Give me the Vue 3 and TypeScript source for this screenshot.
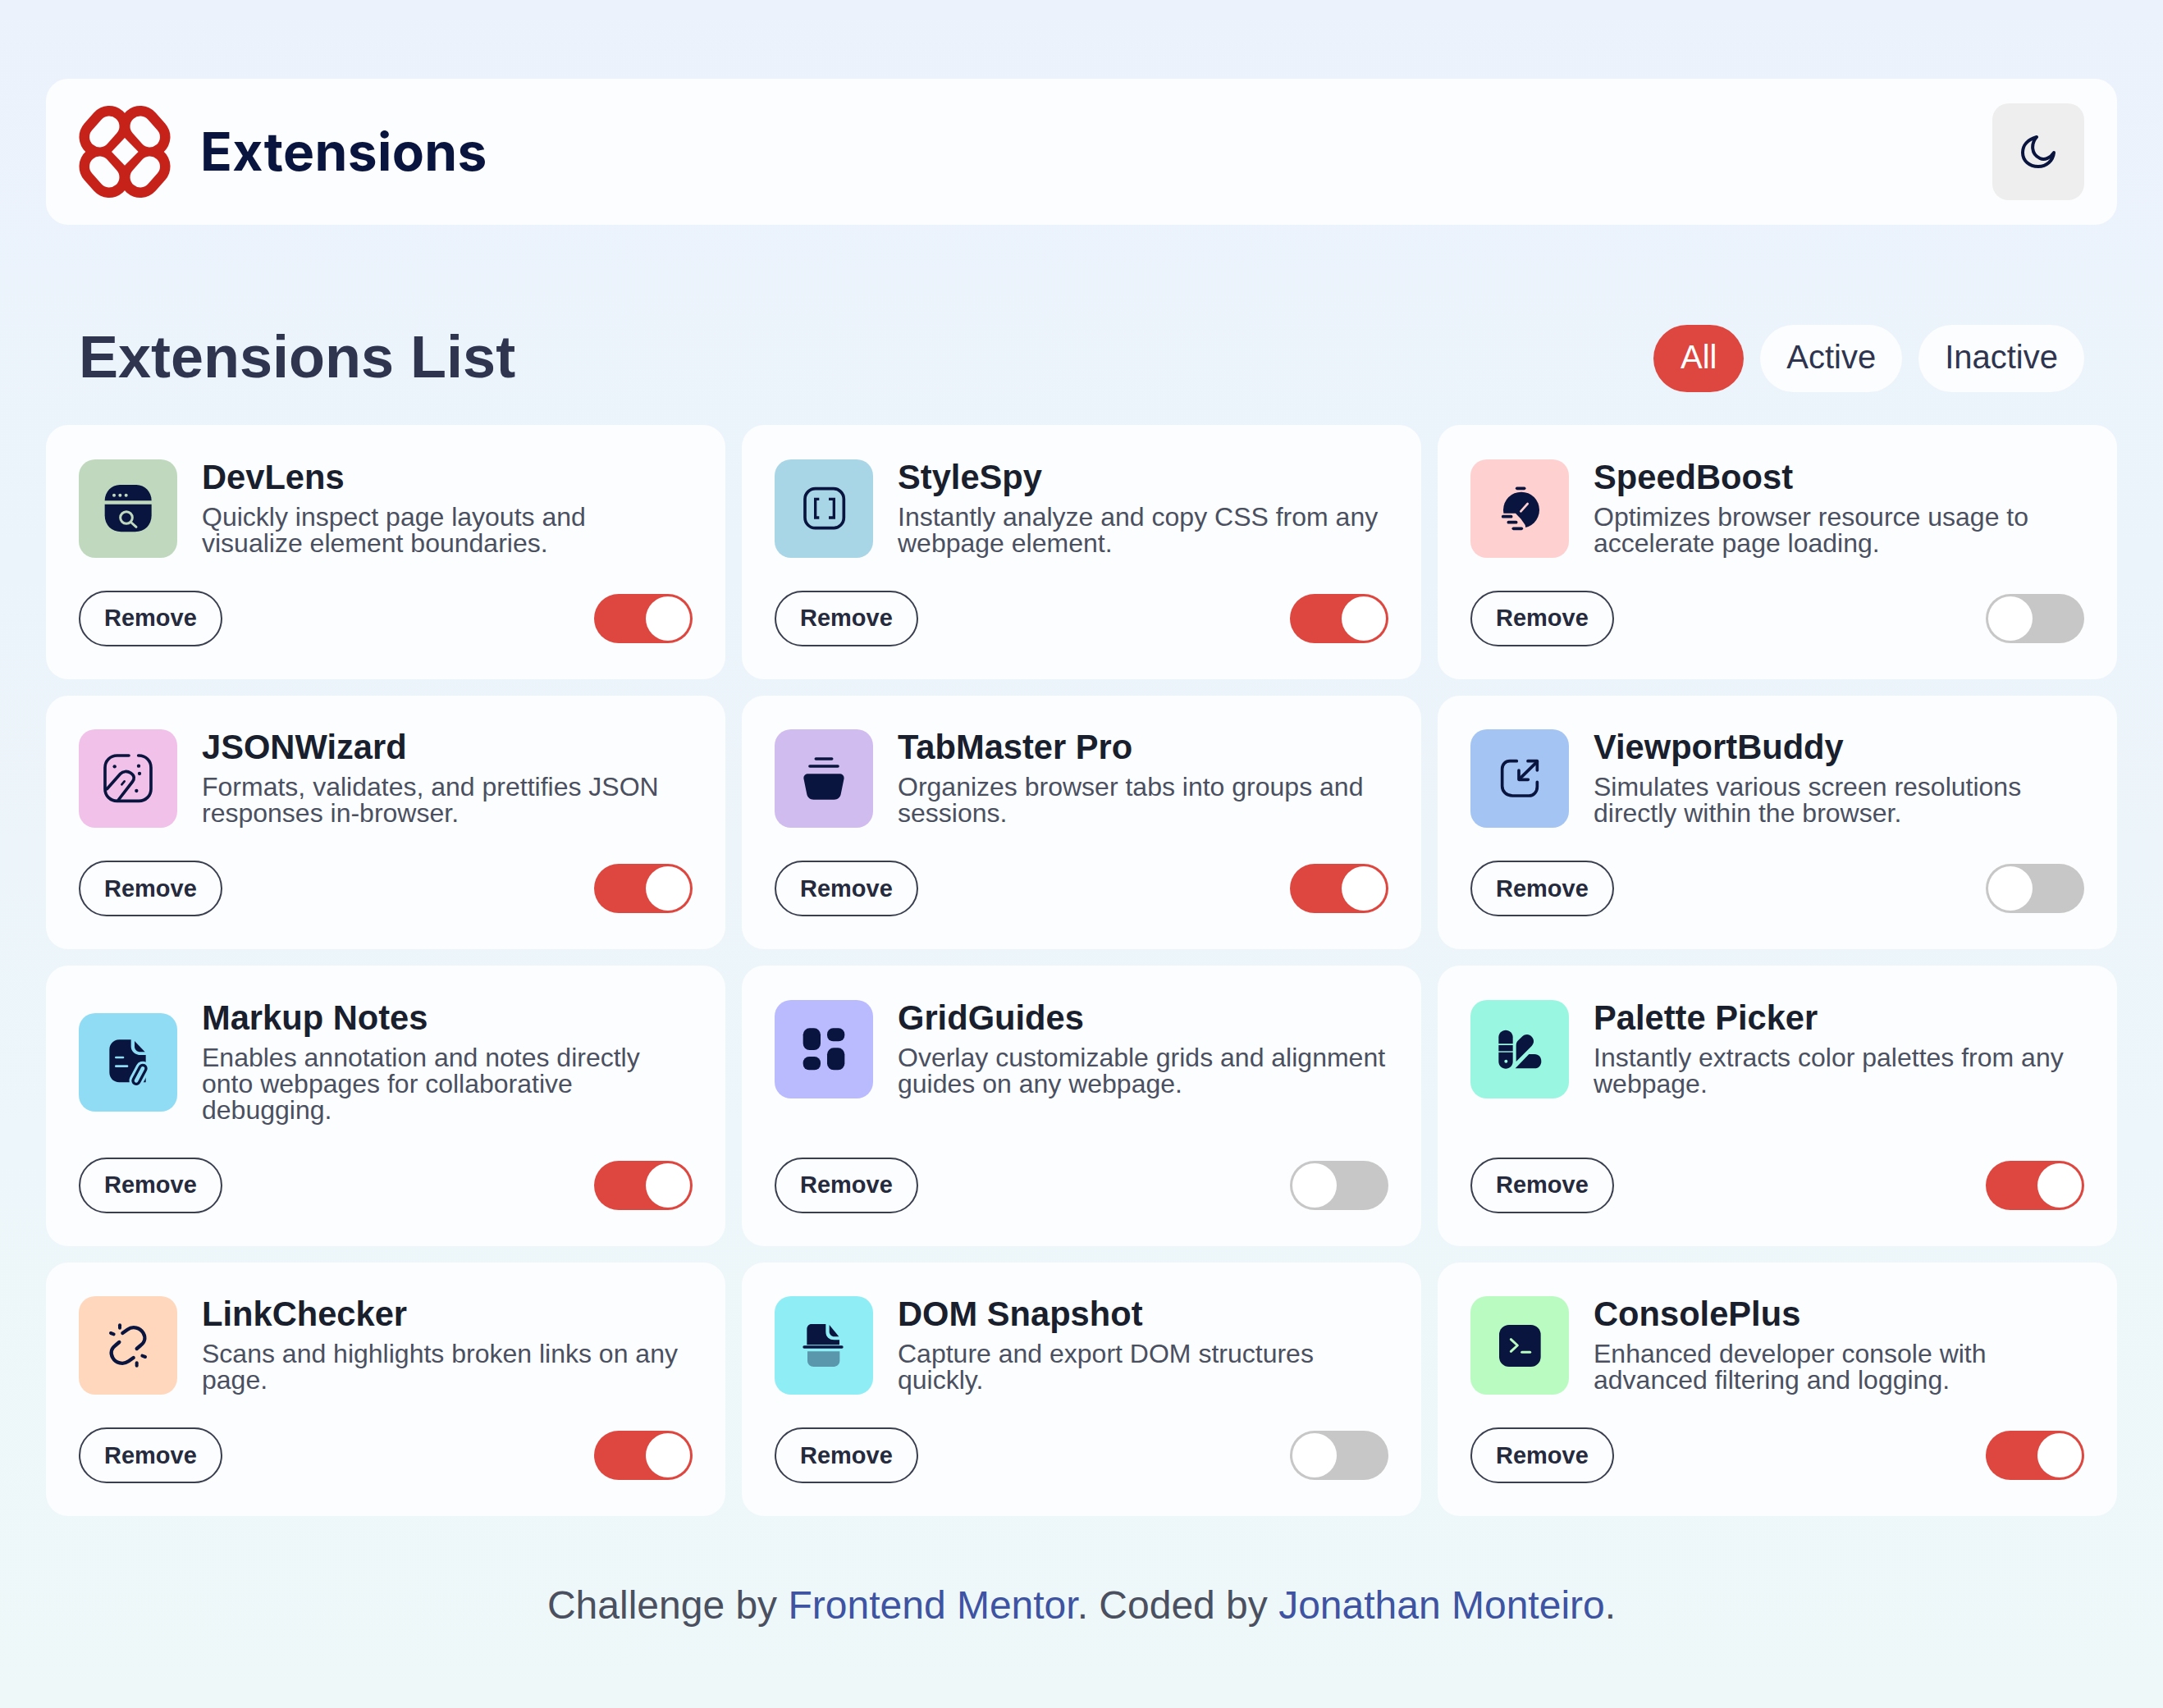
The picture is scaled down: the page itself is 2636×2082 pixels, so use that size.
<script setup lang="ts">
import { ref } from 'vue'

interface Extension {
  name: string
  description: string
  tile: string
  icon: string
  active: boolean
}

const filters = ['All', 'Active', 'Inactive']
const current = ref('All')

const DARK = '#09153e'

const line = (x1: number, y1: number, x2: number, y2: number, color: string, w = 11) =>
  `<path d="M${x1} ${y1}L${x2} ${y2}" stroke="${color}" stroke-width="${w}" stroke-linecap="round" fill="none"/>`

const stroke = (d: string, w = 11) =>
  `<path d="${d}" stroke="${DARK}" stroke-width="${w}" stroke-linecap="round" stroke-linejoin="round" fill="none"/>`

const fill = (d: string, color = DARK, extra = '') => `<path d="${d}" fill="${color}" ${extra}/>`

const dot = (x: number, y: number, r: number, color: string) =>
  `<circle cx="${x}" cy="${y}" r="${r}" fill="${color}"/>`

const box = (x: number, y: number, w: number, h: number, r: number) =>
  `<rect x="${x}" y="${y}" width="${w}" height="${h}" rx="${r}" fill="${DARK}"/>`

// every icon is drawn on a 360 x 360 tile
const icons: Record<string, (t: string) => string> = {
  devlens: (t) =>
    fill('M95 151C95 118 120 93 150 93H211C241 93 266 118 266 151Z') +
    fill('M95 164H266V205C266 240 241 265 206 265H155C120 265 95 240 95 205Z') +
    dot(129, 131, 6, t) + dot(151, 131, 6, t) + dot(173, 131, 6, t) +
    `<circle cx="174" cy="213" r="22" stroke="${t}" stroke-width="9" fill="none"/>` +
    line(192, 231, 210, 247, t, 9),
  stylespy: () =>
    `<rect x="111" y="107" width="142" height="144" rx="38" stroke="${DARK}" stroke-width="11" fill="none"/>` +
    `<path d="M163 145H149V213H163M198 145H217V213H198" stroke="${DARK}" stroke-width="10" fill="none"/>`,
  speedboost: (t) =>
    line(170, 106, 197, 106, DARK) +
    dot(186, 185, 66, DARK) +
    fill('M100 197H165L185 218L200 240L205 266H100Z', t) +
    line(119, 209, 149, 209, DARK) + line(139, 230, 167, 230, DARK) + line(157, 253, 187, 253, DARK) +
    line(184, 190, 209, 162, t, 8),
  jsonwizard: () =>
    stroke('M183 96H140C115 96 96 115 96 140V218C96 243 115 262 140 262H220C245 262 264 243 264 218V140C264 115 245 96 220 96H218') +
    dot(131, 136, 6.5, DARK) + dot(219, 134, 6.5, DARK) + dot(222, 162, 6.5, DARK) + dot(211, 225, 6.5, DARK) +
    stroke('M103 218L152 163C162 152 178 152 190 160C205 170 204 182 196 192L145 258') +
    line(157, 202, 167, 190, DARK, 8),
  tabmaster: () =>
    line(151, 108, 209, 108, DARK) + line(129, 135, 231, 135, DARK) +
    fill('M124 163H236C250 163 256 172 253 184L242 238C239 250 230 257 218 257H142C130 257 121 250 118 238L107 184C104 172 110 163 124 163Z'),
  viewport: () =>
    stroke('M169 116H144C128 116 116 128 116 145V208C116 228 132 243 154 243H214C232 243 244 228 244 210V193') +
    stroke('M179 182L244 118') + stroke('M210 116H244V150') + stroke('M177 150V184H211'),
  markup: (t) =>
    fill('M148 97H191V122C191 140 208 153 226 153H245V253H148C128 253 112 238 112 217V133C112 113 128 97 148 97Z') +
    fill('M204 102L242 142H226C212 142 204 132 204 122Z') +
    line(136, 162, 162, 162, t, 8) + line(136, 194, 177, 194, t, 8) +
    line(210, 247, 234, 202, t, 52) + line(210, 247, 234, 202, DARK, 34) + line(210, 247, 234, 202, t, 14),
  gridguides: () =>
    box(104, 103, 64, 80, 24) + box(192, 103, 64, 48, 22) + box(104, 207, 64, 49, 22) + box(192, 175, 64, 81, 24),
  palette: (t) =>
    fill('M103 136C103 121 115 110 129 110C143 110 155 121 155 136V160H103Z') +
    box(103, 165, 52, 22, 0) +
    fill('M103 191H155V225C155 240 143 251 129 251C115 251 103 240 103 225Z') +
    dot(130, 224, 6, t) +
    fill('M167 225V165C167 157 170 152 176 146L190 133C200 124 215 124 224 134C234 144 233 158 224 168Z') +
    fill('M164 250L214 198H234C250 198 259 210 259 224C259 238 250 250 234 250Z'),
  linkchecker: () =>
    stroke('M160 135L178 122C198 108 225 115 236 135C246 153 240 170 226 180L212 192', 13) +
    stroke('M200 225L182 238C162 252 135 245 124 225C114 207 120 190 134 180L148 168', 13) +
    line(150, 106, 150, 116, DARK, 12) + line(117, 135, 128, 139, DARK, 12) +
    line(212, 244, 212, 254, DARK, 12) + line(243, 222, 232, 218, DARK, 12),
  domsnapshot: () =>
    fill('M135 102H187V130C187 150 200 160 218 160H237V178H118V120C118 110 125 102 135 102Z') +
    fill('M200 105L235 148H218C208 148 200 140 200 130Z') +
    line(108, 186, 246, 186, DARK, 10) +
    fill('M120 202H238V235C238 250 228 258 215 258H143C130 258 120 250 120 235Z', DARK, 'opacity="0.4"'),
  consoleplus: (t) =>
    box(105, 105, 152, 153, 36) +
    `<path d="M148 158L172 180L148 202" stroke="${t}" stroke-width="9" stroke-linecap="round" stroke-linejoin="round" fill="none"/>` +
    line(188, 205, 218, 205, t, 9),
}

const extensions: Extension[] = [
  { name: 'DevLens', description: 'Quickly inspect page layouts and visualize element boundaries.', tile: '#c0d9be', icon: 'devlens', active: true },
  { name: 'StyleSpy', description: 'Instantly analyze and copy CSS from any webpage element.', tile: '#a9d6e6', icon: 'stylespy', active: true },
  { name: 'SpeedBoost', description: 'Optimizes browser resource usage to accelerate page loading.', tile: '#ffd0d0', icon: 'speedboost', active: false },
  { name: 'JSONWizard', description: 'Formats, validates, and prettifies JSON responses in-browser.', tile: '#f1c1e9', icon: 'jsonwizard', active: true },
  { name: 'TabMaster Pro', description: 'Organizes browser tabs into groups and sessions.', tile: '#d0bcef', icon: 'tabmaster', active: true },
  { name: 'ViewportBuddy', description: 'Simulates various screen resolutions directly within the browser.', tile: '#a4c4f3', icon: 'viewport', active: false },
  { name: 'Markup Notes', description: 'Enables annotation and notes directly onto webpages for collaborative debugging.', tile: '#90dcf5', icon: 'markup', active: true },
  { name: 'GridGuides', description: 'Overlay customizable grids and alignment guides on any webpage.', tile: '#babaff', icon: 'gridguides', active: false },
  { name: 'Palette Picker', description: 'Instantly extracts color palettes from any webpage.', tile: '#99f6e0', icon: 'palette', active: true },
  { name: 'LinkChecker', description: 'Scans and highlights broken links on any page.', tile: '#ffd7bd', icon: 'linkchecker', active: true },
  { name: 'DOM Snapshot', description: 'Capture and export DOM structures quickly.', tile: '#8fedf5', icon: 'domsnapshot', active: false },
  { name: 'ConsolePlus', description: 'Enhanced developer console with advanced filtering and logging.', tile: '#b9fbc0', icon: 'consoleplus', active: true },
]
</script>

<template>
  <div class="page">
    <header class="topbar">
      <div class="brand">
        <svg class="logo" viewBox="0 0 112 112" aria-hidden="true">
          <g fill="none" stroke="#c7221a" stroke-width="50" stroke-linecap="round">
            <path d="M37 25L25.5 38" />
            <path d="M75 25L86.5 38" />
            <path d="M25.5 74L37 87" />
            <path d="M86.5 74L75 87" />
          </g>
          <rect x="34" y="34" width="44" height="44" fill="#c7221a" />
          <g fill="none" stroke="#fcfdff" stroke-width="25" stroke-linecap="round">
            <path d="M37 25L25.5 38" />
            <path d="M75 25L86.5 38" />
            <path d="M25.5 74L37 87" />
            <path d="M86.5 74L75 87" />
          </g>
          <path d="M56 39L72.6 56L56 72.7L40 56Z" fill="#fcfdff" />
        </svg>
        <span class="brand-name">Extensions</span>
      </div>
      <button class="theme" type="button" aria-label="Toggle theme">
        <svg width="42" height="40" viewBox="0 0 42 40">
          <path
            d="M19 2C8 5 2 12 2 21C2 31 10 38 21 38C31 38 39 31 40 21C36 27 29 31 23 28C12 23 12 10 19 2Z"
            fill="none"
            stroke="#09153e"
            stroke-width="4"
            stroke-linejoin="round"
          />
        </svg>
      </button>
    </header>

    <section class="list-head">
      <h1>Extensions List</h1>
      <div class="filters">
        <button
          v-for="f in filters"
          :key="f"
          type="button"
          class="pill"
          :class="{ on: f === current }"
          @click="current = f"
        >
          {{ f }}
        </button>
      </div>
    </section>

    <main class="grid">
      <article v-for="ext in extensions" :key="ext.name" class="card">
        <div class="info">
          <svg
            class="tile"
            viewBox="0 0 360 360"
            :style="{ background: ext.tile }"
            aria-hidden="true"
            v-html="icons[ext.icon](ext.tile)"
          ></svg>
          <div class="copy">
            <h2>{{ ext.name }}</h2>
            <p>{{ ext.description }}</p>
          </div>
        </div>
        <div class="actions">
          <button class="remove" type="button">Remove</button>
          <span class="switch" :class="{ on: ext.active }"><span class="knob"></span></span>
        </div>
      </article>
    </main>

    <footer class="credit">
      Challenge by <a href="#">Frontend Mentor</a>. Coded by <a href="#">Jonathan Monteiro</a>.
    </footer>
  </div>
</template>

<style>
html,
body {
  margin: 0;
}
</style>

<style scoped>
.page {
  box-sizing: border-box;
  min-height: 2082px;
  padding: 96px 56px 0;
  background: linear-gradient(180deg, #ebf2fc 0%, #eef8f9 100%);
  font-family: 'Liberation Sans', Arial, sans-serif;
  color: #09153e;
}

.topbar {
  display: flex;
  align-items: center;
  justify-content: space-between;
  height: 178px;
  padding: 0 40px;
  background: #fcfdff;
  border-radius: 27px;
}

.brand {
  display: flex;
  align-items: center;
  gap: 36px;
}

.logo {
  width: 112px;
  height: 112px;
}

.brand-name {
  padding-bottom: 2px;
  font-family: Inter, sans-serif;
  font-size: 64px;
  font-weight: 700;
  letter-spacing: 0.4px;
  color: #09153e;
}

.theme {
  display: flex;
  align-items: center;
  justify-content: center;
  width: 112px;
  height: 118px;
  padding: 0;
  border: 0;
  border-radius: 20px;
  background: #eeeeee;
}

.list-head {
  display: flex;
  align-items: center;
  justify-content: space-between;
  height: 82px;
  margin: 122px 0 40px;
  padding: 0 40px;
}

h1 {
  margin: 0;
  padding-bottom: 5px;
  font-size: 72px;
  font-weight: 700;
  color: #2f354f;
}

.filters {
  display: flex;
  gap: 20px;
}

.pill {
  min-width: 110px;
  height: 82px;
  padding: 0 32px 3px;
  border: 0;
  border-radius: 41px;
  background: #fcfdff;
  font-family: inherit;
  font-size: 40px;
  color: #2f354f;
}

.pill.on {
  background: #de473f;
  color: #ffffff;
}

.grid {
  display: grid;
  grid-template-columns: repeat(3, 1fr);
  gap: 20px;
}

.card {
  display: flex;
  flex-direction: column;
  justify-content: space-between;
  padding: 41.75px 40px 39.75px;
  background: #fcfdff;
  border-radius: 27px;
}

.info {
  display: flex;
  align-items: center;
  gap: 30px;
}

.tile {
  flex: none;
  width: 120px;
  height: 120px;
  border-radius: 20px;
}

h2 {
  margin: 0 0 10px;
  font-size: 41.67px;
  line-height: 44px;
  font-weight: 700;
  color: #1a1f2e;
}

p {
  margin: 0 0 2px;
  font-size: 32px;
  line-height: 32px;
  color: #4a5060;
}

.actions {
  display: flex;
  align-items: center;
  justify-content: space-between;
  margin-top: 40px;
}

.remove {
  height: 68px;
  padding: 0 29px;
  border: 2px solid #3a3f4f;
  border-radius: 34px;
  background: transparent;
  font-family: inherit;
  font-size: 29px;
  font-weight: 700;
  color: #252b3d;
}

.switch {
  display: flex;
  align-items: center;
  box-sizing: border-box;
  width: 120px;
  height: 60px;
  padding: 3px;
  border-radius: 30px;
  background: #c7c7c7;
}

.switch.on {
  justify-content: flex-end;
  background: #de473f;
}

.knob {
  width: 54px;
  height: 54px;
  border-radius: 50%;
  background: #ffffff;
}

.credit {
  padding-top: 82px;
  font-size: 48px;
  line-height: 54px;
  text-align: center;
  color: #4a5060;
}

.credit a {
  color: #3e54a3;
  text-decoration: none;
}
</style>
